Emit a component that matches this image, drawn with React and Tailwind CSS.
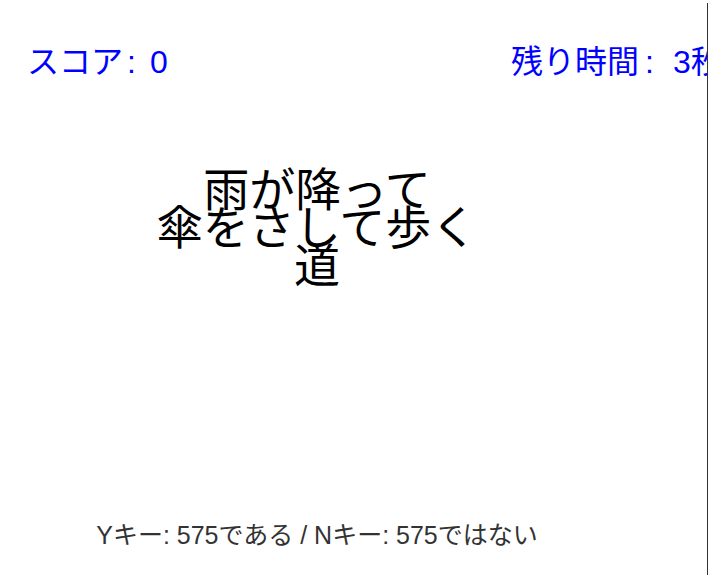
export default function App() {
  const font = { fontFamily: '"Liberation Sans", "Noto Sans CJK JP", sans-serif' };
  return (
    <div className="w-[727px] h-[578px] bg-white overflow-hidden" style={font}>
      <div className="mt-[3px] w-[708px] h-[572px] border-r border-[#333] overflow-hidden relative">
        {/* header: score / time left */}
        <div className="flex pt-[39px] pl-[27px] text-[32px] leading-[40px] text-[#0000ff] whitespace-nowrap">
          <span className="w-[484px] shrink-0">
            スコア<span className="ml-[4px]">:</span><span className="ml-[14px]">0</span>
          </span>
          <span className="shrink-0">
            残り時間<span className="ml-[6px]">:</span><span className="ml-[19px]">3秒</span>
          </span>
        </div>

        {/* poem */}
        <div className="w-[634px] flex flex-col items-center mt-[89px] text-[46px] leading-[38px] text-black">
          <span>雨が降って</span>
          <span>傘をさして歩く</span>
          <span>道</span>
        </div>

        <div className="w-[634px] text-center mt-[235px] text-[25px] leading-[30px] text-[#333]">
          Yキー: 575である / Nキー: 575ではない
        </div>
      </div>
    </div>
  );
}
